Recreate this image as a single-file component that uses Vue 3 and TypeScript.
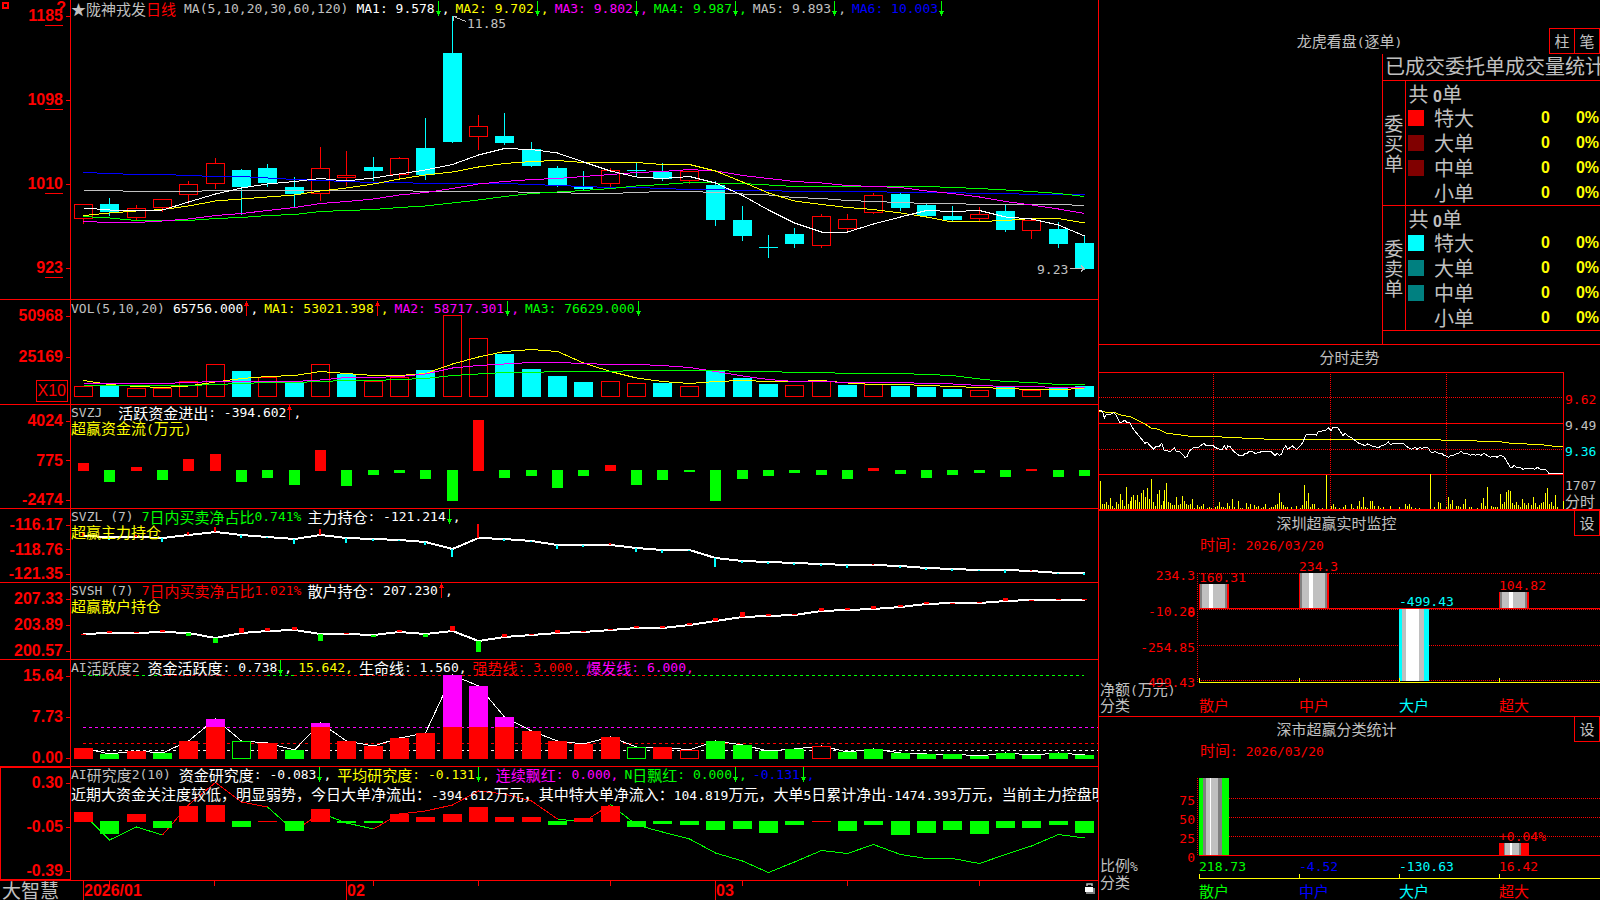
<script setup lang="ts">
import { h } from 'vue'

type Dir = 'up' | 'down'
interface Item { t: string; c: string; a?: Dir; end?: string; k?: 'tight' | 'name' }
interface Rect { x: number; y: number; w: number; h: number; c: string; hollow?: boolean }
interface Line { pts: string; c: string; w?: number; dash?: string }
interface Panel {
  id: string; top: number; height: number; ticks: string[]; unit?: string; mark?: boolean; active?: boolean
  legend: Item[]; sub?: Item; under: Line[]; rects: Rect[]; over: Line[]
}

const RED = '#ff0000', CYAN = '#00ffff', GREEN = '#00ff00', WHITE = '#ffffff'
const YELLOW = '#ffff00', MAGENTA = '#ff00ff', BLUE = '#0000ff', SILVER = '#c0c0c0', GRAY = '#808080'

/* Latin runs use a smaller monospaced face than the Han characters beside them. */
const Txt = (p: { t: string }) =>
  (p.t.match(/[\x00-\x7f]+|[^\x00-\x7f]+/g) ?? []).map(s =>
    h('span', { class: s.charCodeAt(0) < 128 ? 'lat' : 'han' }, s))
Txt.props = ['t']

const cx = (i: number) => 83 + Math.round(i * 26.34)
const line = (ys: number[], c: string, from = 0, w = 1): Line => ({
  pts: ys.map((y, i) => `${cx(i + from) + 0.5},${y}`).join(' '), c, w,
})
const box = (i: number, top: number, bottom: number, c: string, width = 19, hollow = false): Rect =>
  ({ x: cx(i) - (width - 1) / 2, y: top, w: width, h: Math.max(1, bottom - top), c, hollow })

/* direction, body top, body bottom, high, low */
const candles: [string, number, number, number, number][] = [
  ['r', 204, 219, 204, 224], ['c', 204, 212, 198, 216], ['r', 208, 218, 205, 220], ['r', 199, 208, 199, 212],
  ['r', 184, 195, 181, 204], ['r', 163, 184, 158, 189], ['c', 170, 187, 169, 215], ['c', 168, 183, 164, 187],
  ['c', 187, 194, 177, 207], ['r', 168, 194, 147, 201], ['r', 175, 178, 151, 186], ['c', 167, 171, 157, 181],
  ['r', 158, 175, 157, 178], ['c', 148, 175, 118, 180], ['c', 53, 142, 16, 142], ['r', 126, 137, 115, 150],
  ['c', 136, 143, 113, 145], ['c', 149, 166, 142, 167], ['c', 168, 185, 166, 187], ['c', 186, 189, 171, 189],
  ['r', 170, 184, 168, 187], ['c', 170, 171, 163, 176], ['c', 172, 179, 163, 181], ['r', 171, 181, 171, 184],
  ['c', 185, 220, 181, 226], ['c', 220, 236, 206, 241], ['c', 247, 248, 235, 258], ['c', 234, 244, 228, 248],
  ['r', 216, 246, 214, 248], ['r', 219, 229, 214, 232], ['r', 195, 213, 193, 214], ['c', 194, 208, 193, 211],
  ['c', 205, 216, 203, 216], ['c', 216, 220, 206, 222], ['r', 214, 219, 207, 221], ['c', 211, 230, 205, 232],
  ['r', 220, 231, 219, 239], ['c', 229, 244, 222, 248], ['c', 243, 269, 236, 269],
]
const candleRects = candles.flatMap(([d, t, b, hi, lo], i): Rect[] => {
  const c = d === 'r' ? RED : CYAN
  return [box(i, hi, t, c, 1), box(i, b, lo, c, 1), box(i, t, b, c, 19, d === 'r')]
})

const ma5 = [208, 210, 211, 210, 202, 194, 188, 184, 181.5, 178.5, 181, 178, 174, 170, 164.5, 155, 148.5, 149.5, 153, 162, 171, 177, 178.5, 176.5, 183, 195.5, 210, 223, 232, 232, 224, 217, 210.5, 211.5, 210.5, 217, 219, 225, 236]
const ma10 = [215.5, 213, 211, 209.5, 206, 201, 199, 197, 195, 191, 188, 184, 179, 175, 172, 167, 163.5, 161.5, 160.5, 162.5, 162.5, 162.5, 164.5, 164.5, 171, 182, 193, 201, 204.5, 207.5, 209.5, 213, 217, 222, 221.5, 220.5, 218.5, 218.5, 223]
const ma20 = [221.5, 222.5, 222.5, 221, 219, 215.5, 213.5, 210.5, 207.5, 203.5, 201.5, 199, 195, 192.5, 188.5, 184, 181.5, 179.5, 178.5, 176.5, 174.5, 172.5, 171.5, 169.5, 171, 175.5, 178.5, 181.5, 183, 185.5, 186.5, 187.5, 191, 193.5, 197, 201.5, 205, 209, 213.5]
const ma30 = [216.5, 218, 220.5, 220.5, 220.5, 218.5, 217.5, 215.5, 214.5, 211.5, 210.5, 209.5, 207.5, 206, 203, 200, 196.5, 193.5, 192, 190.5, 188.5, 186, 184.5, 182.5, 183, 183.5, 185, 186.5, 186.5, 186.5, 186.5, 186.5, 186.5, 187.5, 188.5, 190, 191.5, 193.5, 196.5]
const ma60 = [190.5, 190.5, 191.5, 191.5, 191.5, 190.5, 190.5, 190.5, 190.5, 190.5, 190.5, 190.5, 190.5, 191.5, 191.5, 191.5, 191.5, 192.5, 192.5, 193.5, 193.5, 192.5, 191.5, 191.5, 192.5, 194, 195, 197.5, 198.5, 200.5, 201.5, 202.5, 203.5, 203.5, 204.5, 204.5, 204.5, 204.5, 205.5]
const ma120 = [172.5, 173.5, 174.5, 174.5, 175.5, 176.5, 176.5, 178, 179.5, 180.5, 181.5, 182.5, 182.5, 183.5, 183.5, 183.5, 183.5, 184.5, 185.5, 186.5, 187.5, 187.5, 188.5, 189.5, 189.5, 190.5, 190.5, 191.5, 191.5, 191.5, 191.5, 192.5, 192.5, 192.5, 193.5, 193.5, 194.5, 194.5, 194.5]

const volTop = [386, 386, 388, 388, 381, 364, 371, 377, 382, 364, 374, 381, 377, 370, 315, 338, 354, 369, 376, 382, 381, 383, 383, 386, 370, 378, 384, 385, 381, 385, 384, 386, 387, 389, 390, 387, 390, 388, 386]
const volDir = 'rcrrrrcrcrcrrcrrcccc' + 'rrcrcccrrcrcccrcrcc'
const volY = [380.5, 384.5, 386.5, 387.5, 386, 382, 378.5, 376.5, 375.5, 371.5, 373.5, 375.5, 375.5, 373.5, 364, 357, 351.5, 349.5, 351.5, 363, 371.5, 378, 381.5, 383.5, 381.5, 380.5, 381.5, 381.5, 380.5, 383, 384.5, 384.5, 385.5, 386.5, 387.5, 388.5, 389.5, 389.5, 388.5]
const volM = [383.5, 383.5, 383.5, 383.5, 382.5, 381.5, 381.5, 381.5, 381.5, 380, 377.5, 377.5, 376.5, 374, 368, 365.5, 364, 362.5, 362.5, 363.5, 364.5, 364.5, 365.5, 367.5, 371.5, 376, 379.5, 381.5, 381.5, 382.5, 382.5, 382.5, 383.5, 384, 385.5, 386.5, 386.5, 387.5, 387.5]
const volG = [385.5, 385.5, 385.5, 385.5, 385.5, 384.5, 383.5, 382.5, 382.5, 381.5, 380.5, 380.5, 379.5, 378.5, 375.5, 374, 372.5, 372.5, 371.5, 371.5, 371.5, 370.5, 370.5, 370.5, 370.5, 371.5, 371.5, 372.5, 372.5, 373.5, 373.5, 373.5, 374.5, 375.5, 379, 381.5, 382.5, 384.5, 384.5]

const signed = (ys: number[], base: number, width: number): Rect[] =>
  ys.map((y, i) => (y <= base ? box(i, y, base + 1, RED, width) : box(i, base, y, GREEN, width)))

const flow = [463, 482, 467, 480, 459, 454, 482, 478, 485, 450, 486, 475, 473, 479, 501, 420, 478, 476, 488, 476, 465, 485, 480, 472, 501, 479, 476, 473, 475, 479, 468, 474, 478, 475, 473, 477, 469, 477, 476]

const mainLine = [536, 537, 537, 538, 535, 532, 535, 537, 539, 535, 538, 539, 540, 542, 549, 538, 539, 541, 545, 545, 545, 548, 550, 550, 558, 561, 562, 563, 564, 565, 565, 566, 568, 569, 570, 570, 571, 573, 573]
const mainTick = [532, 540, 535, 542, 532, 527, 538, 538, 544, 529, 543, 541, 541, 545, 557, 524, 541, 542, 549, 547, 543, 552, 553, 551, 567, 563, 564, 565, 566, 568, 564, 568, 570, 571, 571, 573, 570, 574, 575]
const retailLine = [634, 633, 633, 632, 633, 638, 633, 631, 630, 634, 634, 635, 632, 634, 631, 641, 637, 635, 633, 632, 630, 628, 628, 625, 621, 617, 616, 615, 611, 610, 609, 607, 604, 603, 603, 601, 600, 600, 600]
const retailTick = [634, 631, 632, 630, 636, 643, 628, 628, 627, 641, 633, 637, 630, 637, 626, 652, 634, 634, 630, 631, 629, 626, 626, 623, 618, 612, 614, 614, 608, 608, 606, 605, 602, 603, 602, 598, 600, 599, 599]
const stems = (ls: number[], ts: number[], width: number, down: string): Rect[] =>
  ls.map((y, i) => ({
    x: cx(i) - Math.floor(width / 2), w: width, y: Math.min(y, ts[i]), h: Math.max(1, Math.abs(ts[i] - y)),
    c: ts[i] <= y ? RED : down,
  }))

const actTop = [748, 754, 751, 753, 741, 719, 741, 743, 750, 723, 741, 746, 738, 733, 675, 686, 717, 731, 741, 744, 737, 747, 747, 750, 741, 745, 751, 749, 746, 752, 749, 753, 754, 754, 756, 753, 755, 753, 755]
const actKind = 'rgrgrrGrgrrrrrrrrrrrrGrRgggg' + 'Rgggggggggg'
const actRects = actTop.flatMap((y, i): Rect[] => {
  const k = actKind[i]
  const c = k.toLowerCase() === 'r' ? RED : GREEN
  const body = box(i, Math.max(y, 727), 759, c, 19, k === 'R' || k === 'G')
  return y < 727 ? [box(i, y, 727, MAGENTA), body] : [body]
})
const level = (y: number, c: string, a = 0, b?: number): Line =>
  ({ pts: `${cx(a)},${y} ${b === undefined ? 1098 : cx(b)},${y}`, c, dash: '3 3' })

const research = [812, 834, 814, 828, 806, 805, 827, 821, 831, 809, 823, 823, 814, 817, 814, 807, 817, 817, 825, 818, 806, 827, 824, 825, 830, 829, 833, 825, 821, 831, 825, 835, 833, 830, 834, 828, 828, 825, 833]
const avg = [814, 840, 827, 835, 805, 782.5, 802, 807, 831, 813, 823, 829, 814, 811, 805, 791, 794, 801, 819, 822, 804.5, 825, 832, 839, 853, 861, 872.5, 862, 850.5, 853.5, 844.5, 854.5, 858.5, 858.5, 863.5, 854.5, 846, 834.5, 838]
const part = (a: number, b: number, c: string) => line(avg.slice(a, b + 1), c, a)

const panels: Panel[] = [
  {
    id: 'kline', top: 0, height: 300, ticks: ['1185', '1098', '1010', '923'], mark: true,
    legend: [
      { t: '★', c: SILVER, k: 'tight' }, { t: '陇神戎发', c: SILVER, k: 'tight' }, { t: '日线', c: RED, k: 'name' },
      { t: 'MA(5,10,20,30,60,120)', c: SILVER, k: 'name' },
      { t: 'MA1: 9.578', c: WHITE, a: 'down', end: ',' }, { t: 'MA2: 9.702', c: YELLOW, a: 'down', end: ',' },
      { t: 'MA3: 9.802', c: MAGENTA, a: 'down', end: ',' }, { t: 'MA4: 9.987', c: GREEN, a: 'down', end: ',' },
      { t: 'MA5: 9.893', c: SILVER, a: 'down', end: ',' }, { t: 'MA6: 10.003', c: BLUE, a: 'down' },
    ],
    under: [], rects: candleRects,
    over: [line(ma60, SILVER), line(ma120, BLUE), line(ma30, GREEN), line(ma20, MAGENTA), line(ma10, YELLOW), line(ma5, WHITE)],
  },
  {
    id: 'vol', top: 300, height: 105, ticks: ['50968', '25169'], unit: 'X10',
    legend: [
      { t: 'VOL(5,10,20)', c: SILVER, k: 'name' }, { t: '65756.000', c: WHITE, a: 'up', end: ',' },
      { t: 'MA1: 53021.398', c: YELLOW, a: 'up', end: ',' }, { t: 'MA2: 58717.301', c: MAGENTA, a: 'down', end: ',' },
      { t: 'MA3: 76629.000', c: GREEN, a: 'down' },
    ],
    under: [],
    rects: volTop.map((y, i) => box(i, y, 397, volDir[i] === 'r' ? RED : CYAN, 19, volDir[i] === 'r')),
    over: [line(volY, YELLOW), line(volM, MAGENTA), line(volG, GREEN)],
  },
  {
    id: 'flow', top: 405, height: 104, ticks: ['4024', '775', '-2474'],
    legend: [{ t: 'SVZJ ', c: SILVER, k: 'name' }, { t: '活跃资金进出: -394.602', c: WHITE, a: 'up', end: ',' }],
    sub: { t: '超赢资金流(万元)', c: YELLOW },
    under: [], rects: signed(flow, 470, 11), over: [],
  },
  {
    id: 'main', top: 509, height: 74, ticks: ['-116.17', '-118.76', '-121.35'],
    legend: [
      { t: 'SVZL (7)', c: SILVER, k: 'name' }, { t: '7日内买卖净占比0.741%', c: GREEN }, { t: '主力持仓: -121.214', c: WHITE, a: 'down', end: ',' },
    ],
    sub: { t: '超赢主力持仓', c: YELLOW },
    under: [line(mainLine, WHITE, 0, 2)], rects: stems(mainLine, mainTick, 2, CYAN), over: [],
  },
  {
    id: 'retail', top: 583, height: 77, ticks: ['207.33', '203.89', '200.57'],
    legend: [
      { t: 'SVSH (7)', c: SILVER, k: 'name' }, { t: '7日内买卖净占比1.021%', c: RED }, { t: '散户持仓: 207.230', c: WHITE, a: 'up', end: ',' },
    ],
    sub: { t: '超赢散户持仓', c: YELLOW },
    under: [line(retailLine, WHITE, 0, 2)], rects: stems(retailLine, retailTick, 5, GREEN), over: [],
  },
  {
    id: 'active', top: 660, height: 107, ticks: ['15.64', '7.73', '0.00'],
    legend: [
      { t: 'AI活跃度2', c: SILVER, k: 'name' }, { t: '资金活跃度: 0.738', c: WHITE, a: 'down', end: ',' }, { t: '15.642,', c: YELLOW },
      { t: '生命线: 1.560,', c: WHITE }, { t: '强势线: 3.000,', c: RED }, { t: '爆发线: 6.000,', c: MAGENTA },
    ],
    under: [
      level(675.5, GREEN, 0, 1), level(675.5, RED, 1, 2), level(675.5, GREEN, 2, 3), level(675.5, RED, 3, 7),
      level(675.5, GREEN, 7, 8), level(675.5, RED, 8, 22), level(675.5, GREEN, 22, 38),
      level(727.5, MAGENTA), level(743.5, RED), level(750.5, WHITE), line(actTop, WHITE),
    ],
    rects: actRects, over: [],
  },
  {
    id: 'research', top: 767, height: 114, ticks: ['0.30', '-0.05', '-0.39'], active: true,
    legend: [
      { t: 'AI研究度2(10)', c: SILVER, k: 'name' }, { t: '资金研究度: -0.083', c: WHITE, a: 'down', end: ',' },
      { t: '平均研究度: -0.131', c: YELLOW, a: 'down', end: ',' }, { t: '连续飘红: 0.000,', c: MAGENTA },
      { t: 'N日飘红: 0.000', c: GREEN, a: 'down', end: ',' }, { t: '-0.131', c: BLUE, a: 'down', end: ',' },
    ],
    sub: { t: '近期大资金关注度较低，明显弱势，今日大单净流出：-394.612万元，其中特大单净流入：104.819万元，大单5日累计净出-1474.393万元，当前主力控盘明显', c: WHITE },
    under: [
      part(0, 3, GREEN), part(3, 7, RED), part(7, 8, GREEN), part(8, 9, RED), part(9, 11, GREEN), part(11, 18, RED),
      part(18, 19, GREEN), part(19, 20, RED), part(20, 38, GREEN),
    ],
    rects: signed(research, 821, 19), over: [],
  },
]

const plotX = (x: number) => `${((x - 71) / 1027) * 100}%`
const months = [{ t: '2026/01', x: 84 }, { t: '02', x: 347 }, { t: '03', x: 716 }]
const dateTicks: [number, number][] = [[83, 19], [109, 5], [214, 5], [346, 19], [373, 5], [478, 5], [610, 5], [715, 19], [742, 5], [847, 5], [979, 5]]

const sides = [
  { name: '委买单', rows: [['特大', '#ff0000'], ['大单', '#800000'], ['中单', '#800000'], ['小单', '']] },
  { name: '委卖单', rows: [['特大', '#00ffff'], ['大单', '#008080'], ['中单', '#008080'], ['小单', '']] },
]

const price = '12,213 18,212 24,218 28,234 34,222 48,222 55,218 64,226 74,246 82,246 90,240 96,248 104,248 110,260 122,276 134,290 150,310 156,306 168,320 176,328 184,318 192,320 200,310 208,332 228,334 238,322 244,334 256,336 270,352 276,350 284,332 294,324 310,322 318,316 326,310 332,316 354,316 360,322 374,328 382,328 388,318 394,328 398,318 406,320 414,332 424,340 432,346 444,346 450,340 456,342 462,334 472,334 480,340 494,338 498,334 528,334 534,340 540,346 546,340 554,346 560,342 566,326 572,318 578,328 592,318 604,328 616,318 624,306 634,282 660,282 664,286 670,274 690,272 700,264 708,272 714,262 728,262 734,272 744,286 750,280 760,288 770,294 782,302 792,310 804,314 810,318 818,312 836,320 852,322 862,316 870,314 880,305 886,314 894,311 926,311 936,320 950,328 962,322 966,328 976,322 980,326 990,322 1000,324 1006,334 1012,338 1020,334 1030,340 1040,340 1046,346 1054,348 1060,352 1068,346 1076,346 1082,342 1090,340 1098,334 1106,340 1118,342 1126,346 1134,342 1142,346 1150,342 1158,346 1166,340 1176,346 1186,352 1200,348 1206,352 1216,346 1228,352 1236,366 1246,382 1252,382 1258,376 1264,381 1276,382 1284,388 1296,384 1304,387 1312,384 1318,388 1328,382 1336,388 1352,388 1362,400 1405,400'
const average = '12,214 30,216 60,218 80,226 105,230 130,242 150,252 168,264 190,268 216,280 250,284 285,289 360,290 440,294 530,298 630,298 740,298 790,298 1000,299 1110,302 1215,305 1250,310 1340,314 1370,318 1405,319'
const ticksVol = '16:423 22:492 28:492 34:486 40:495 46:474 52:498 58:504 64:486 70:492 76:462 82:480 88:498 94:441 100:492 106:483 109:472 115:465 121:480 127:465 133:486 139:460 145:450 151:471 157:444 163:477 169:417 175:486 181:498 187:462 193:450 199:495 205:483 208:450 214:429 220:486 226:489 232:495 238:495 244:471 250:495 256:492 262:468 268:483 274:492 280:495 286:492 292:477 298:504 306:495 313:502 319:498 325:492 337:504 343:500 349:504 361:502 367:498 373:486 379:500 385:502 391:504 397:489 403:498 412:477 418:500 430:483 436:504 442:504 454:489 460:500 466:492 478:495 484:500 490:498 499:504 505:500 511:492 523:504 529:500 535:500 541:495 547:492 553:459 559:486 565:495 571:502 577:500 589:500 604:498 616:504 622:495 628:435 634:483 640:459 646:502 652:492 658:492 670:504 682:504 694:405 709:498 715:492 721:500 733:504 745:500 751:495 769:492 775:504 787:498 793:483 799:500 805:471 811:500 817:504 826:483 832:483 838:498 850:498 856:504 865:502 886:498 913:502 931:492 937:498 943:492 949:502 961:504 973:504 1006:402 1018:502 1030:486 1036:489 1054:502 1060:471 1066:492 1072:480 1084:498 1090:498 1096:502 1105:492 1111:477 1123:500 1129:500 1147:504 1159:489 1165:474 1171:498 1177:441 1189:498 1195:502 1201:500 1207:502 1216:462 1222:492 1228:486 1234:456 1240:450 1246:453 1252:489 1258:495 1264:486 1270:495 1276:500 1282:477 1288:489 1294:495 1300:489 1309:495 1315:471 1321:489 1327:500 1333:495 1339:489 1345:486 1351:459 1357:444 1363:492 1369:486 1375:498 1381:465 1387:500 1405:483'
  .split(' ').map(s => s.split(':').map(Number))
const trendPath = ticksVol.map(([x, y]) => `M${x} ${y}V510`).join('')
const trendLabels = [
  { t: '9.62', c: RED, y: 398 }, { t: '9.49', c: SILVER, y: 424 }, { t: '9.36', c: CYAN, y: 450 },
  { t: '1707', c: SILVER, y: 484 }, { t: '分时', c: SILVER, y: 501 },
]
const trendY = (y: number) => `${((y - 372) / 137) * 100}%`

type Stripe = [string, number]
interface Stat {
  id: string; title: string; top: number; height: number; axisTop: number; zero: number; base: number
  grid: number[]; ticks: [string, number][]; rows: [string, number][]
  bars: { x: number; y: number; h: number; s: Stripe[] }[]
  marks: { t: string; c: string; x: number; y: number }[]
}
const redBar: Stripe[] = [[RED, 1], [GRAY, 2], [SILVER, 7], [WHITE, 4], [SILVER, 12], [GRAY, 2], [RED, 2]]
const stats: Stat[] = [
  {
    id: 'monitor', title: '深圳超赢实时监控', top: 552, height: 164, axisTop: 573, zero: 608, base: 682,
    grid: [573, 609, 645, 680],
    ticks: [['234.3', 574], ['-10.28', 610], ['0', 611], ['-254.85', 646], ['-499.43', 681]],
    rows: [['净额(万元)', 689], ['分类', 705]],
    bars: [
      { x: 1199, y: 584, h: 24, s: redBar }, { x: 1299, y: 573, h: 35, s: redBar },
      { x: 1399, y: 609, h: 72, s: [[CYAN, 3], [SILVER, 4], [WHITE, 13], [SILVER, 5], [CYAN, 5]] },
      { x: 1499, y: 592, h: 16, s: redBar },
    ],
    marks: [
      { t: '160.31', c: RED, x: 1199, y: 576 }, { t: '234.3', c: RED, x: 1299, y: 565 },
      { t: '-499.43', c: CYAN, x: 1399, y: 600 }, { t: '104.82', c: RED, x: 1499, y: 584 },
      { t: '散户', c: RED, x: 1199, y: 705 }, { t: '中户', c: RED, x: 1299, y: 705 },
      { t: '大户', c: CYAN, x: 1399, y: 705 }, { t: '超大', c: RED, x: 1499, y: 705 },
    ],
  },
  {
    id: 'share', title: '深市超赢分类统计', top: 758, height: 142, axisTop: 778, zero: 855, base: 878,
    grid: [798, 817, 836],
    ticks: [['75', 799], ['50', 818], ['25', 837], ['0', 856]],
    rows: [['比例%', 865], ['分类', 882]],
    bars: [
      { x: 1199, y: 778, h: 77, s: [[GREEN, 4], [GRAY, 3], [SILVER, 4], [WHITE, 1], [SILVER, 7], [GRAY, 4], [GREEN, 7]] },
      { x: 1499, y: 843, h: 12, s: [[RED, 5], [GRAY, 1], [SILVER, 5], [WHITE, 2], [SILVER, 7], [GRAY, 2], [RED, 8]] },
    ],
    marks: [
      { t: '+0.04%', c: RED, x: 1499, y: 835 },
      { t: '218.73', c: GREEN, x: 1199, y: 865 }, { t: '-4.52', c: BLUE, x: 1299, y: 865 },
      { t: '-130.63', c: CYAN, x: 1399, y: 865 }, { t: '16.42', c: RED, x: 1499, y: 865 },
      { t: '散户', c: GREEN, x: 1199, y: 891 }, { t: '中户', c: BLUE, x: 1299, y: 891 },
      { t: '大户', c: CYAN, x: 1399, y: 891 }, { t: '超大', c: RED, x: 1499, y: 891 },
    ],
  },
]
const stripeRects = (s: Stripe[]) => {
  let x = 0
  return s.map(([c, w]) => { const r = { c, w, x }; x += w; return r })
}
const statY = (s: Stat, y: number) => `${((y - s.top) / s.height) * 100}%`
const statX = (x: number) => `${((x - 1197) / 403) * 100}%`
</script>

<template>
  <main class="terminal">
    <section class="charts">
      <div v-for="p in panels" :key="p.id" class="panel" :class="p.id">
        <div class="axis" :class="{ active: p.active }">
          <template v-if="p.mark">
            <i class="dot"></i><b class="help">?</b>
          </template>
          <div v-for="t in p.ticks" :key="t" class="tick">
            <span v-if="p.mark">{{ t.slice(0, -2) }}<span class="dec">{{ t.slice(-2) }}</span></span>
            <span v-else>{{ t }}</span>
          </div>
          <div v-if="p.unit" class="unit">{{ p.unit }}</div>
        </div>
        <div class="plot">
          <svg class="canvas" :viewBox="`71 ${p.top} 1027 ${p.height - 1}`" preserveAspectRatio="none">
            <polyline v-for="(l, i) in p.under" :key="'u' + i" :points="l.pts" :stroke="l.c" :stroke-width="l.w ?? 1" :stroke-dasharray="l.dash" />
            <rect
              v-for="(r, i) in p.rects" :key="'r' + i"
              :x="r.hollow ? r.x + 0.5 : r.x" :y="r.hollow ? r.y + 0.5 : r.y"
              :width="r.hollow ? r.w - 1 : r.w" :height="r.hollow ? r.h - 1 : r.h"
              :fill="r.hollow ? '#000' : r.c" :stroke="r.hollow ? r.c : 'none'" />
            <polyline v-for="(l, i) in p.over" :key="'o' + i" :points="l.pts" :stroke="l.c" :stroke-width="l.w ?? 1" />
            <g v-if="p.id === 'kline'" stroke="#c0c0c0" fill="none">
              <path d="M453.500 16.500L466 21.500M453 16.500h4M453.500 16.500v4" />
              <path d="M1070 268.500H1084M1081 265.500L1084 268.500L1081 271.500" />
            </g>
          </svg>
          <div class="legend">
            <div class="row">
              <span v-for="(it, i) in p.legend" :key="i" class="item" :class="it.k" :style="{ color: it.c }">
                <Txt :t="it.t" />
                <svg v-if="it.a" class="arrow" :class="it.a" viewBox="0 0 7 15"><path d="M3.500 0V15M1 10.500h5M2 11.500h3M2 12.500h3" /></svg>
                <Txt v-if="it.end" :t="it.end" />
              </span>
            </div>
            <div v-if="p.sub" class="row sub" :style="{ color: p.sub.c }"><span><Txt :t="p.sub.t" /></span></div>
          </div>
          <template v-if="p.id === 'kline'">
            <span class="note" :style="{ left: plotX(467), top: '7.400%' }"><Txt t="11.85" /></span>
            <span class="note" :style="{ left: plotX(1037), top: '89.600%' }"><Txt t="9.23" /></span>
          </template>
        </div>
      </div>
      <footer class="dates">
        <span class="brand">大智慧</span>
        <div class="scale">
          <svg class="canvas" viewBox="71 0 1027 19" preserveAspectRatio="none">
            <path v-for="d in dateTicks" :key="d[0]" :d="`M${d[0] + 0.5} 0V${d[1]}`" stroke="#f00" />
          </svg>
          <span v-for="m in months" :key="m.t" class="month" :style="{ left: plotX(m.x) }">{{ m.t }}</span>
          <svg class="lock" viewBox="0 0 11 12"><path d="M3 4V2h5v2" fill="none" stroke="#c0c0c0" stroke-width="1.500" /><rect x="2" y="6" width="9" height="6" fill="#808080" /><rect x="1" y="5" width="8" height="5" fill="#fff" /></svg>
        </div>
      </footer>
    </section>

    <aside class="side">
      <section class="orders">
        <header class="head wide">
          <h2><Txt t="龙虎看盘(逐单)" /></h2>
          <div class="tools"><button type="button">柱</button><button type="button">笔</button></div>
        </header>
        <div class="book">
          <table>
            <caption><span>已成交委托单成交量统计</span></caption>
            <colgroup><col class="c1"><col class="c2"><col class="c3"><col><col class="c5"></colgroup>
            <tbody v-for="s in sides" :key="s.name">
              <tr>
                <th class="who" scope="rowgroup" rowspan="5">{{ s.name }}</th>
                <td class="sum" colspan="4">共 <b>0</b>单</td>
              </tr>
              <tr v-for="r in s.rows" :key="r[0]">
                <td><i class="key" :style="{ background: r[1] }"></i></td>
                <td class="kind">{{ r[0] }}</td>
                <td class="num">0</td>
                <td class="num last">0%</td>
              </tr>
            </tbody>
          </table>
        </div>
      </section>

      <section class="trend">
        <h2>分时走势</h2>
        <div class="trend-body">
          <svg class="canvas" viewBox="12 96 1395 411" preserveAspectRatio="none">
            <g stroke="#f00">
              <path d="M12 97.500H1405.500V507M12 250.500H1405M12 403.500H1405" />
              <path d="M12 172.500H1405M12 328.500H1405M355.500 97V507M706.500 97V507M1054.500 97V507" stroke-dasharray="1 1" />
            </g>
            <path :d="trendPath" stroke="#ff0" />
            <polyline :points="average" stroke="#ff0" />
            <polyline :points="price" stroke="#fff" />
          </svg>
          <div class="trend-axis">
            <span v-for="l in trendLabels" :key="l.t" class="mark" :style="{ color: l.c, top: trendY(l.y) }"><Txt :t="l.t" /></span>
          </div>
        </div>
      </section>

      <section v-for="s in stats" :key="s.id" class="stat" :class="s.id">
        <header class="head">
          <h2>{{ s.title }}</h2>
          <button type="button">设</button>
        </header>
        <p class="time"><Txt t="时间: 2026/03/20" /></p>
        <div class="stat-body">
          <div class="stat-axis">
            <span v-for="t in s.ticks" :key="t[0]" class="mark right" :style="{ top: statY(s, t[1]) }"><Txt :t="t[0]" /></span>
            <span v-for="r in s.rows" :key="r[0]" class="mark name" :style="{ top: statY(s, r[1]) }"><Txt :t="r[0]" /></span>
          </div>
          <div class="stat-plot">
            <svg class="canvas" :viewBox="`1197 ${s.top} 403 ${s.height}`" preserveAspectRatio="none">
              <path :d="`M1197.500 ${s.axisTop}V${s.id === 'share' ? s.zero : s.base}`" stroke="#f00" stroke-dasharray="1 1" />
              <path v-for="g in s.grid" :key="g" :d="`M1199 ${g + 0.5}H1600`" stroke="#f00" stroke-dasharray="1 1" />
              <template v-for="b in s.bars" :key="b.x">
                <rect v-for="r in stripeRects(b.s)" :key="r.x" :x="b.x + r.x" :y="b.y" :width="r.w" :height="b.h" :fill="r.c" />
              </template>
              <path :d="`M1199 ${s.zero + 0.5}H1600`" stroke="#f00" />
              <path :d="`M1199 ${s.base + 0.5}H1600M1199.500 ${s.base - 4}v4M1299.500 ${s.base - 4}v4M1399.500 ${s.base - 4}v4M1499.500 ${s.base - 4}v4`" stroke="#ff0" />
            </svg>
            <span v-for="m in s.marks" :key="m.t" class="mark" :style="{ color: m.c, left: statX(m.x), top: statY(s, m.y) }"><Txt :t="m.t" /></span>
          </div>
        </div>
      </section>
    </aside>
  </main>
</template>

<style>
body { margin: 0; background: #000; }
.lat {
  font-family: "DejaVu Sans Mono", "Liberation Mono", monospace;
  font-size: 13px;
  line-height: 1;
}
</style>

<style scoped>
.terminal {
  display: grid;
  grid-template-columns: 1099fr 501fr;
  grid-template-rows: minmax(0, 1fr);
  height: 100vh;
  min-height: 720px;
  background: #000;
  color: #c0c0c0;
  font: 15px/16px "Noto Sans CJK SC", sans-serif;
  white-space: pre;
  overflow: hidden;
}
h2, p { margin: 0; font: inherit; }
button {
  width: 26px;
  height: 26px;
  padding: 0;
  border: 1px solid #f00;
  background: #000;
  color: #c0c0c0;
  font: inherit;
}
.canvas {
  display: block;
  width: 100%;
  height: 100%;
  min-height: 0;
  fill: none;
  shape-rendering: crispEdges;
  grid-area: 1 / 1;
}
.canvas polyline, .canvas path, .canvas rect { vector-effect: non-scaling-stroke; }

.charts {
  display: grid;
  grid-template-columns: minmax(0, 1fr);
  grid-template-rows:
    minmax(0, 300fr) minmax(0, 105fr) minmax(0, 104fr) minmax(0, 74fr)
    minmax(0, 77fr) minmax(0, 107fr) minmax(0, 114fr) minmax(0, 19fr);
  border-right: 1px solid #f00;
  min-width: 0;
}
.panel {
  display: grid;
  grid-template-columns: 71px minmax(0, 1fr);
  grid-template-rows: minmax(0, 1fr);
  border-bottom: 1px solid #f00;
}
.axis {
  position: relative;
  display: flex;
  flex-direction: column;
  justify-content: space-between;
  align-items: flex-end;
  box-sizing: border-box;
  padding-top: 8px;
  border-right: 1px solid #f00;
  color: #f00;
  font: 700 16px/16px "Liberation Sans", sans-serif;
}
.kline .axis { padding-bottom: 23px; }
.vol .axis { justify-content: flex-start; gap: 25px; }
.axis.active { border: 1px solid #f00; padding-top: 7px; }
.tick { display: flex; align-items: center; gap: 3px; }
.tick::after { content: ""; width: 4px; height: 1px; background: #f00; }
.dec { padding-bottom: 1px; border-bottom: 1px solid #f00; }
.unit {
  padding: 0 1px;
  margin: -10px 2px 0 0;
  border: 1px solid #f00;
  font-weight: 400;
  line-height: 20px;
}
.dot { position: absolute; left: 2px; top: 2px; width: 3px; height: 3px; border: 2px solid #f00; }
.help { position: absolute; right: 4px; top: 0; }
.plot { position: relative; display: grid; grid-template-rows: minmax(0, 1fr); grid-template-columns: minmax(0, 1fr); overflow: hidden; }
.legend { grid-area: 1 / 1; line-height: 15px; z-index: 1; min-width: 0; }
.kline .legend, .vol .legend { padding-top: 1px; }
.row { display: flex; height: 15px; }
.research .sub { margin-top: 4px; }
.item { display: flex; align-items: center; margin-right: 6px; }
.item.tight { margin-right: 0; }
.item.name { margin-right: 8px; }
.arrow { width: 7px; height: 15px; fill: none; stroke: #0f0; shape-rendering: crispEdges; }
.arrow.up { stroke: #f00; transform: rotate(180deg); }
.note { position: absolute; transform: translateY(-50%); color: #c0c0c0; }

.dates { display: grid; grid-template-columns: 71px minmax(0, 1fr); grid-template-rows: minmax(0, 1fr); }
.brand { padding-left: 2px; font-size: 19px; line-height: 18px; }
.scale { position: relative; min-height: 0; overflow: hidden; }
.month { position: absolute; top: 0; color: #f00; font: 700 16px/19px "Liberation Sans", sans-serif; }
.lock { position: absolute; right: 3px; top: 1px; width: 11px; height: 12px; }

.side {
  display: grid;
  grid-template-columns: minmax(0, 1fr);
  grid-template-rows: minmax(0, 345fr) minmax(0, 166fr) minmax(0, 206fr) minmax(0, 183fr);
  min-width: 0;
}
.orders { display: flex; flex-direction: column; padding-top: 28px; border-bottom: 1px solid #f00; overflow: hidden; }
.head { display: grid; grid-template-columns: minmax(0, 1fr) auto; align-items: center; text-align: center; }
.head.wide { grid-template-columns: minmax(0, 1fr) auto minmax(0, 1fr); }
.head.wide h2 { grid-column: 2; }
.tools { display: flex; justify-self: end; }
.tools button + button { margin-left: -1px; }
.book { flex: 1; align-self: flex-end; width: 217px; border-left: 1px solid #f00; overflow: hidden; }
table { width: 100%; border-collapse: collapse; table-layout: fixed; font-size: 20px; line-height: 24px; }
caption { height: 26px; text-align: left; line-height: 24px; }
caption span { display: block; width: 0; padding-left: 2px; }
tbody { border-top: 1px solid #f00; border-bottom: 1px solid #f00; }
.c1 { width: 22px; }
.c2 { width: 24px; }
.c3 { width: 46px; }
.c5 { width: 50px; }
td, th { padding: 0; height: 25px; font-weight: 400; line-height: 23px; }
.who { border-right: 1px solid #f00; white-space: normal; line-height: 20px; font-size: 19px; }
.sum { padding-left: 3px; height: 24px; text-align: left; }
.sum b, .num { font: 700 16px/16px "Liberation Sans", sans-serif; }
.key { display: block; width: 16px; height: 16px; margin-left: 2px; }
.kind { padding-left: 5px; }
.num { color: #ff0; text-align: right; }
.num.last { padding-right: 1px; }

.trend { display: grid; grid-template-rows: 27px minmax(0, 1fr); border-bottom: 2px solid #f00; text-align: center; }
.trend h2 { line-height: 23px; }
.trend-body { display: grid; grid-template-columns: minmax(0, 1fr) 36px; grid-template-rows: minmax(0, 1fr); }
.trend-axis { position: relative; }

.stat { display: flex; flex-direction: column; border-bottom: 1px solid #f00; overflow: hidden; }
.share { border-bottom: 0; }
.stat .head { height: 25px; align-items: start; }
.stat .head h2 { line-height: 23px; }
.stat .head button { height: 25px; border-top: 0; }
.time { height: 16px; padding-left: 101px; color: #f00; }
.stat-body { flex: 1; min-height: 0; display: grid; grid-template-columns: 98px minmax(0, 1fr); grid-template-rows: minmax(0, 1fr); }
.stat-axis { position: relative; color: #f00; }
.stat-plot { position: relative; display: grid; grid-template-rows: minmax(0, 1fr); }
.mark { position: absolute; left: 1px; transform: translateY(-50%); }
.mark.right { left: auto; right: 2px; }
.mark.name { color: #c0c0c0; }
</style>
